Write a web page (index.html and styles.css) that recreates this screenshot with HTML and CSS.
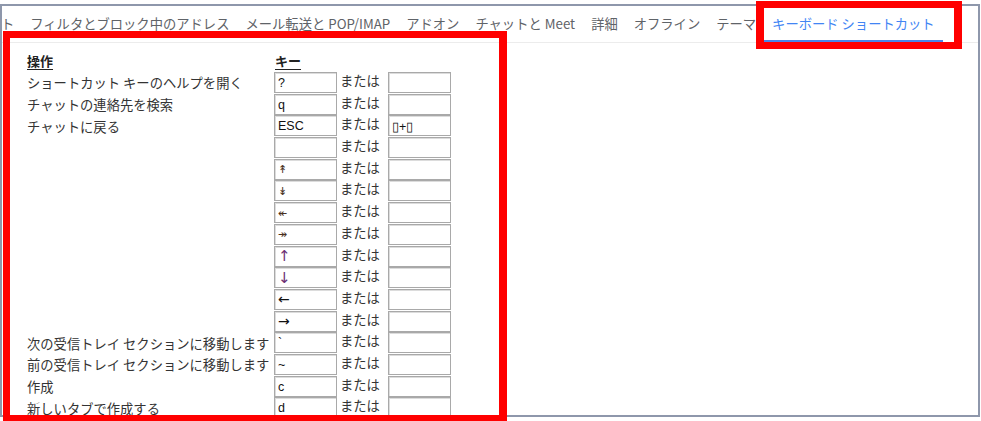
FILE: index.html
```html
<!DOCTYPE html>
<html lang="ja">
  <head>
    <meta charset="UTF-8" />
    <meta name="viewport" content="width=device-width, initial-scale=1.0" />
    <title>設定 - キーボード ショートカット</title>
    <link rel="stylesheet" href="styles.css">
  </head>
  <body>
    <div class="frame">
      <div class="tab-bar">
        <div class="tabs">
          <div class="tab">アカウントとインポート</div>
          <div class="tab">フィルタとブロック中のアドレス</div>
          <div class="tab">メール転送と POP/IMAP</div>
          <div class="tab">アドオン</div>
          <div class="tab">チャットと Meet</div>
          <div class="tab">詳細</div>
          <div class="tab">オフライン</div>
          <div class="tab">テーマ</div>
          <div class="tab active">キーボード ショートカット</div>
        </div>
      </div>

      <div class="shortcuts">
        <div class="col-head">操作</div>
        <div class="col-head key-head">キー</div>

        <div class="label">ショートカット キーのヘルプを開く</div>
        <input class="key" type="text" value="?" />
        <div class="or">または</div>
        <input class="key" type="text" value="" />

        <div class="label">チャットの連絡先を検索</div>
        <input class="key" type="text" value="q" />
        <div class="or">または</div>
        <input class="key" type="text" value="" />

        <div class="label">チャットに戻る</div>
        <input class="key" type="text" value="ESC" />
        <div class="or">または</div>
        <input class="key" type="text" value="&#x25AF;+&#x25AF;" />

        <div class="label"></div>
        <input class="key" type="text" value="" />
        <div class="or">または</div>
        <input class="key" type="text" value="" />

        <div class="label"></div>
        <input class="key small-arrow" type="text" value="↟" />
        <div class="or">または</div>
        <input class="key" type="text" value="" />

        <div class="label"></div>
        <input class="key small-arrow" type="text" value="↡" />
        <div class="or">または</div>
        <input class="key" type="text" value="" />

        <div class="label"></div>
        <input class="key small-arrow" type="text" value="↞" />
        <div class="or">または</div>
        <input class="key" type="text" value="" />

        <div class="label"></div>
        <input class="key small-arrow" type="text" value="↠" />
        <div class="or">または</div>
        <input class="key" type="text" value="" />

        <div class="label"></div>
        <input class="key tall-arrow" type="text" value="↑" />
        <div class="or">または</div>
        <input class="key" type="text" value="" />

        <div class="label"></div>
        <input class="key tall-arrow" type="text" value="↓" />
        <div class="or">または</div>
        <input class="key" type="text" value="" />

        <div class="label"></div>
        <input class="key wide-arrow" type="text" value="←" />
        <div class="or">または</div>
        <input class="key" type="text" value="" />

        <div class="label"></div>
        <input class="key wide-arrow" type="text" value="→" />
        <div class="or">または</div>
        <input class="key" type="text" value="" />

        <div class="label">次の受信トレイ セクションに移動します</div>
        <input class="key" type="text" value="`" />
        <div class="or">または</div>
        <input class="key" type="text" value="" />

        <div class="label">前の受信トレイ セクションに移動します</div>
        <input class="key" type="text" value="~" />
        <div class="or">または</div>
        <input class="key" type="text" value="" />

        <div class="label">作成</div>
        <input class="key" type="text" value="c" />
        <div class="or">または</div>
        <input class="key" type="text" value="" />

        <div class="label">新しいタブで作成する</div>
        <input class="key" type="text" value="d" />
        <div class="or">または</div>
        <input class="key" type="text" value="" />

        <div class="label">メールを検索</div>
        <input class="key" type="text" value="/" />
        <div class="or">または</div>
        <input class="key" type="text" value="" />
      </div>
    </div>

    <!-- highlight boxes -->
    <div class="mark mark-tab"></div>
    <div class="mark mark-table"></div>
  </body>
</html>
```

FILE: styles.css
```css
html, body {
  margin: 0;
  padding: 0;
  background-color: #ffffff;
  overflow: hidden;
}

body {
  font-family: "Noto Sans CJK JP", "Noto Sans", sans-serif;
  font-size: 13.3px;
  color: #333;
  width: 981px;
  height: 421px;
  position: relative;
}

.frame {
  margin-top: 4px;
  width: 980px;
  height: 413px;
  border: 2px solid #8e97ab;
  box-sizing: border-box;
  overflow: hidden;
}

.tab-bar {
  height: 36px;
  border-bottom: 1px solid #ececec;
  overflow: hidden;
}

.tabs {
  display: flex;
  height: 100%;
  margin-left: -142px;
  white-space: nowrap;
}

.tab {
  display: flex;
  align-items: center;
  padding: 0 8px;
  box-sizing: border-box;
  border-bottom: 2px solid transparent;
  color: #5f6368;
  font-size: 13.3px;
}

.tab.active {
  color: #4285f4;
  border-bottom-color: #4a86e8;
}

.shortcuts {
  display: grid;
  grid-template-columns: 247px 63px 51px 63px;
  grid-template-rows: 21px;
  grid-auto-rows: 21.7px;
  align-items: center;
  padding: 8px 0 0 25px;
}

.col-head {
  font-weight: bold;
  color: #222;
  text-decoration: underline;
  text-underline-offset: 3px;
  font-size: 13px;
  align-self: start;
}

.key-head {
  grid-column: 2 / span 3;
  padding-left: 1px;
}

.label {
  grid-column: 1;
  white-space: nowrap;
  color: #333;
}

.key {
  width: 63px;
  height: 21px;
  margin: 0;
  padding: 1px 3px 0;
  box-sizing: border-box;
  border: 1px solid #a9a9a9;
  box-shadow: inset 1px 1px 0 #dcdcdc;
  background-color: #ffffff;
  font-family: "Liberation Sans", Arial, sans-serif;
  font-size: 12.5px;
  color: #111;
  outline: none;
  align-self: start;
}

.small-arrow {
  font-size: 11px;
  color: #4a3020;
}

.tall-arrow {
  font-family: "DejaVu Sans", sans-serif;
  font-size: 15px;
  padding-top: 0;
  color: #6b2f73;
}

.wide-arrow {
  font-family: "DejaVu Sans", sans-serif;
  font-size: 14px;
  padding-top: 0;
}

.or {
  padding-left: 3px;
  color: #333;
  align-self: start;
  line-height: 18px;
}

.mark {
  position: absolute;
  border: 8px solid #ff0000;
  box-sizing: border-box;
}

.mark-tab {
  left: 756px;
  top: 1px;
  width: 206px;
  height: 48px;
  border-width: 7px 8px;
}

.mark-table {
  left: 3px;
  top: 31px;
  width: 504px;
  height: 392px;
  border-width: 7px 8px 8px 7px;
}
```
